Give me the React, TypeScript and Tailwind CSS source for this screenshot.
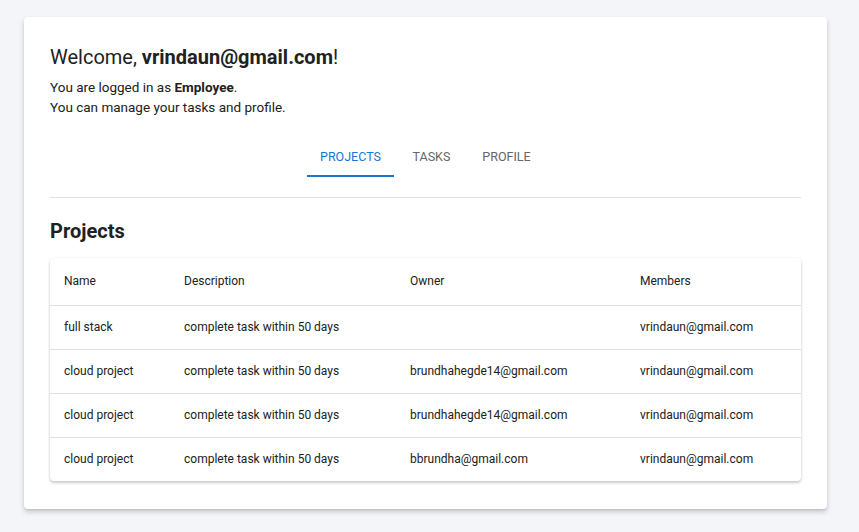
const rows = [
  { name: 'full stack', desc: 'complete task within 50 days', owner: '', members: 'vrindaun@gmail.com' },
  { name: 'cloud project', desc: 'complete task within 50 days', owner: 'brundhahegde14@gmail.com', members: 'vrindaun@gmail.com' },
  { name: 'cloud project', desc: 'complete task within 50 days', owner: 'brundhahegde14@gmail.com', members: 'vrindaun@gmail.com' },
  { name: 'cloud project', desc: 'complete task within 50 days', owner: 'bbrundha@gmail.com', members: 'vrindaun@gmail.com' },
]

const tabs = ['Projects', 'Tasks', 'Profile']

export default function App() {
  return (
    <div className="min-h-[532px] bg-[#f4f5f9] px-6 pt-[17px] pb-5 font-['Roboto',sans-serif] text-[#212121]">
      <div className="w-[803px] rounded bg-white px-[26px] pt-[28px] pb-[28px] shadow-[0_3px_5px_rgba(0,0,0,0.18),0_1px_2px_rgba(0,0,0,0.08)]">
        <h1 className="text-[20px] leading-[24px]">
          Welcome, <span className="font-bold">vrindaun@gmail.com</span>!
        </h1>
        <p className="mt-[8px] text-[13.5px] leading-[20px]">
          You are logged in as <span className="font-bold">Employee</span>.
        </p>
        <p className="text-[13.5px] leading-[20px]">You can manage your tasks and profile.</p>

        <div className="mt-[20px] flex justify-center border-b border-[#e0e0e0] pb-[20px]">
          {tabs.map((t, i) => (
            <div
              key={t}
              className={`flex h-[40px] min-w-[75px] items-center justify-center px-[13px] pt-[2px] text-[12.5px] uppercase ${
                i === 0 ? 'border-b-2 border-[#1976d2] text-[#1976d2]' : 'border-b-2 border-transparent text-[#666]'
              }`}
            >
              {t}
            </div>
          ))}
        </div>

        <h2 className="mt-[19px] text-[20px] font-bold leading-[28px]">Projects</h2>

        <div className="mt-[13px] overflow-hidden rounded bg-white shadow-[0_2px_3px_rgba(0,0,0,0.2),0_0_2px_rgba(0,0,0,0.08)]">
          <table className="w-full border-collapse text-left text-[12px]">
            <thead>
              <tr className="h-[47px] border-b border-[#e0e0e0]">
                <th className="w-[120px] pl-[14px] font-normal">Name</th>
                <th className="w-[226px] pl-[14px] font-normal">Description</th>
                <th className="w-[230px] pl-[14px] font-normal">Owner</th>
                <th className="pl-[14px] font-normal">Members</th>
              </tr>
            </thead>
            <tbody>
              {rows.map((r, i) => (
                <tr key={i} className={`h-[44px] ${i < rows.length - 1 ? 'border-b border-[#e0e0e0]' : ''}`}>
                  <td className="pl-[14px]">{r.name}</td>
                  <td className="pl-[14px]">{r.desc}</td>
                  <td className="pl-[14px]">{r.owner}</td>
                  <td className="pl-[14px]">{r.members}</td>
                </tr>
              ))}
            </tbody>
          </table>
        </div>
      </div>
    </div>
  )
}
